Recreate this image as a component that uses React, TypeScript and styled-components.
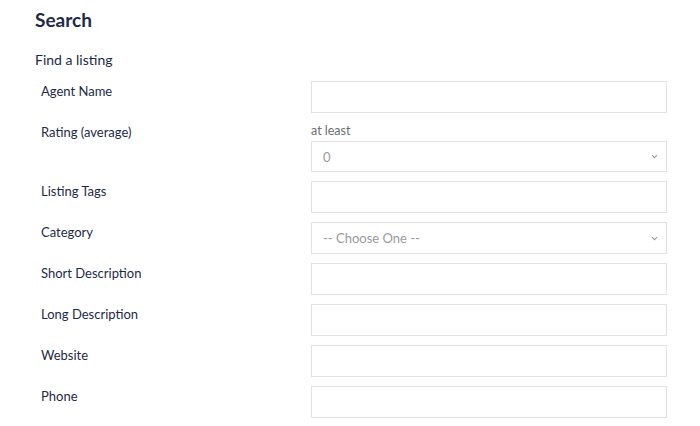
import React from 'react';
import styled, {createGlobalStyle} from 'styled-components';

const GlobalStyle = createGlobalStyle`
  body {
    margin: 0;
    background: #ffffff;
    font-family: Lato, "Noto Sans", sans-serif;
  }
`

const fields = [
    {label: 'Agent Name', kind: 'text'},
    {label: 'Rating (average)', kind: 'rating'},
    {label: 'Listing Tags', kind: 'text'},
    {label: 'Category', kind: 'category'},
    {label: 'Short Description', kind: 'text'},
    {label: 'Long Description', kind: 'text'},
    {label: 'Website', kind: 'text'},
    {label: 'Phone', kind: 'text'},
];

const Chevron = () => (
    <svg width="7" height="5" viewBox="0 0 7 5">
        <path d="M1 1.2l2.5 2.5 2.5-2.5" fill="none" stroke="#999" strokeWidth="1.1"/>
    </svg>
);

const Dropdown = ({value, tall}: {value: string, tall?: boolean}) => (
    <SelectBox $tall={tall}>
        <span>{value}</span>
        <Chevron/>
    </SelectBox>
);

export default function App() {
    return (
        <Page>
            <GlobalStyle/>
            <Title>Search</Title>
            <Subtitle>Find a listing</Subtitle>
            <Form>
                {fields.map(f => (
                    <Row key={f.label}>
                        <Label>{f.label}</Label>
                        <Control>
                            {f.kind === 'text' && <TextInput/>}
                            {f.kind === 'rating' && (
                                <>
                                    <Hint>at least</Hint>
                                    <Dropdown value={'0'}/>
                                </>
                            )}
                            {f.kind === 'category' && <Dropdown value={'-- Choose One --'} tall/>}
                        </Control>
                    </Row>
                ))}
            </Form>
        </Page>
    );
}

const Page = styled.div `
  padding: 6px 34px 0 35px;
  color: #1d2a46;
`

const Title = styled.h1 `
  margin: 0;
  font-size: 19px;
  font-weight: 700;
  line-height: 28px;
  color: #1d2a46;
`

const Subtitle = styled.h2 `
  margin: 16px 0 0;
  font-size: 14px;
  font-weight: 400;
  line-height: 20px;
  color: #1d2a46;
`

const Form = styled.div `
  margin-top: 11px;
  display: flex;
  flex-direction: column;
  gap: 9px;
`

const Row = styled.div `
  display: grid;
  grid-template-columns: 276px 356px;
`

const Label = styled.div `
  padding: 2px 0 0 6px;
  font-size: 13px;
  line-height: 16px;
  color: #1d2a46;
`

const Control = styled.div `
  display: flex;
  flex-direction: column;
`

const Hint = styled.div `
  height: 19px;
  font-size: 12.5px;
  line-height: 18px;
  color: #6b6e73;
`

const TextInput = styled.div `
  box-sizing: border-box;
  height: 32px;
  border: 1px solid #e2e2e2;
  background: #fff;
`

const SelectBox = styled.div<{$tall?: boolean}> `
  box-sizing: border-box;
  height: ${p => p.$tall ? '32px' : '31px'};
  padding: 0 8px 0 11px;
  display: flex;
  align-items: center;
  justify-content: space-between;
  border: 1px solid #e2e2e2;
  font-size: 13px;
  color: #9a9a9a;
`
